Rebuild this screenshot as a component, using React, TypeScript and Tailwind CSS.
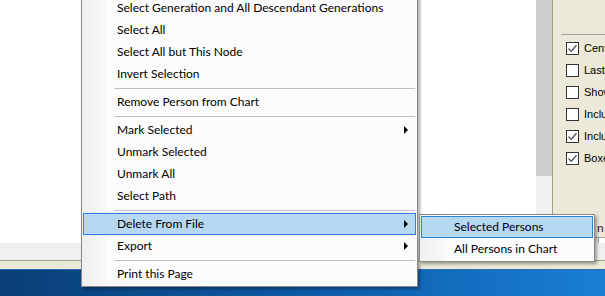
import React from 'react';

type MenuEntry = { label?: string; sep?: boolean; arrow?: boolean; active?: boolean };

const mainItems: MenuEntry[] = [
    { label: 'Select Generation and All Descendant Generations' },
    { label: 'Select All' },
    { label: 'Select All but This Node' },
    { label: 'Invert Selection' },
    { sep: true },
    { label: 'Remove Person from Chart' },
    { sep: true },
    { label: 'Mark Selected', arrow: true },
    { label: 'Unmark Selected' },
    { label: 'Unmark All' },
    { label: 'Select Path' },
    { sep: true },
    { label: 'Delete From File', arrow: true, active: true },
    { label: 'Export', arrow: true },
    { sep: true },
    { label: 'Print this Page' },
];

const subItems: MenuEntry[] = [
    { label: 'Selected Persons', active: true },
    { label: 'All Persons in Chart' },
];

const options = [
    { label: 'Center on Root Person', checked: true },
    { label: 'Last Names in Capitals', checked: false },
    { label: 'Show Photos', checked: false },
    { label: 'Include Spouses', checked: false },
    { label: 'Include Siblings', checked: true },
    { label: 'Boxes Same Size', checked: true },
];

const Arrow = () => (
    <span className="w-0 h-0 border-y-[4px] border-y-transparent border-l-[4px] border-l-black" />
);

const Check = ({ checked }: { checked: boolean }) => (
    <span className="w-[13px] h-[13px] border border-[#333333] bg-white flex items-center justify-center shrink-0">
        {checked && (
            <svg width="11" height="11" viewBox="0 0 11 11">
                <path d="M1.5 5.5 L4.2 8.2 L9.5 2.2" fill="none" stroke="#555555" strokeWidth="1.3" />
            </svg>
        )}
    </span>
);

const MenuRow = ({ item, padLeft }: { item: MenuEntry; padLeft: string }) => {
    if (item.sep) {
        return (
            <div className="h-[6px] flex items-center pl-[31px] pr-[1px]">
                <div className="h-px w-full bg-[#c0c0c0]" />
            </div>
        );
    }
    return (
        <div
            className={`h-[22px] flex items-center justify-between border pr-[7px] ${padLeft} ${item.active ? 'bg-[#b7d8f3] border-[#2a84d8]' : 'border-transparent'}`}
        >
            <span className="whitespace-nowrap">{item.label}</span>
            {item.arrow && <Arrow />}
        </div>
    );
};

export default function App() {
    return (
        <div className="relative w-[605px] h-[296px] overflow-hidden flex flex-col bg-[#0d5aa5] font-['Lato',sans-serif]">
            <div className="flex flex-col h-[269px] shrink-0">
                <div className="flex h-[243px]">
                    <div className="flex-1 bg-white" />
                    <div className="w-[16px] flex flex-col">
                        <div className="h-[176px] bg-[#cdcdcd]" />
                        <div className="flex-1 bg-[#f0f0f0]" />
                    </div>
                    <div className="w-[53px] border-l border-[#9da57f] bg-[#ece9d8] flex flex-col overflow-hidden">
                        <div className="h-[34px] shrink-0" />
                        <div className="ml-[8px] h-px bg-[#a0a0a0] shrink-0" />
                        <div className="flex flex-col pt-[2px] font-['Liberation_Sans',sans-serif] text-[11px] text-black">
                            {options.map((o) => (
                                <div key={o.label} className="h-[22px] flex items-center gap-[5px] pl-[13px] whitespace-nowrap">
                                    <Check checked={o.checked} />
                                    <span>{o.label}</span>
                                </div>
                            ))}
                        </div>
                        <div className="h-[50px] shrink-0" />
                        <div className="h-[18px] flex items-center pl-[44px] text-[12px] text-[#1b1b4b] whitespace-nowrap">
                            n In
                        </div>
                        <div className="h-[5px] ml-[35px] border-t border-[#a8a8a8] flex justify-end">
                            <div className="w-[7px] h-[5px] bg-white border-l border-[#a8a8a8]" />
                        </div>
                    </div>
                </div>
                <div className="h-[17px] bg-[#f0f0f0]" />
                <div className="flex-1 border-t border-[#9da57f] bg-[#ece9d8]" />
            </div>
            <div className="flex-1 border-t border-[#2a6fb3] bg-gradient-to-r from-[#0a3f78] via-[#0d5aa6] to-[#1a7fd4]" />

            {/* context menu */}
            <div className="absolute left-[81px] top-[-5px] w-[337px] bg-[#fcfcfc] border border-[#8a8a8a] py-[1px] px-[1px] text-[12px] text-black shadow-[2px_2px_3px_rgba(0,0,0,0.35)]">
                <div className="absolute left-0 top-0 bottom-0 w-[25px] bg-gradient-to-r from-[#efefef] to-[#f9f9f9]" />
                <div className="relative flex flex-col">
                    {mainItems.map((it, i) => (
                        <MenuRow key={i} item={it} padLeft="pl-[33px]" />
                    ))}
                </div>
            </div>

            {/* submenu */}
            <div className="absolute left-[419px] top-[214px] w-[176px] bg-[#fcfcfc] border border-[#8a8a8a] py-[1px] px-[1px] text-[12px] text-black shadow-[2px_2px_3px_rgba(0,0,0,0.35)]">
                <div className="absolute left-0 top-0 bottom-0 w-[24px] bg-gradient-to-r from-[#efefef] to-[#f9f9f9]" />
                <div className="relative flex flex-col">
                    {subItems.map((it, i) => (
                        <MenuRow key={i} item={it} padLeft="pl-[32px]" />
                    ))}
                </div>
            </div>
        </div>
    );
}
